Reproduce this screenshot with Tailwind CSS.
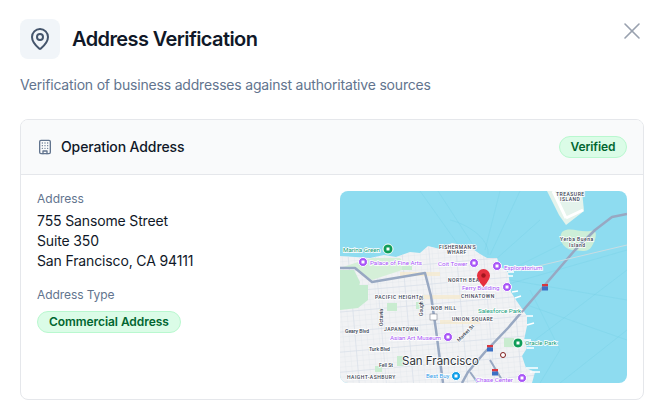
<!doctype html>
<html>
<head>
<meta charset="utf-8">
<script src="https://cdn.jsdelivr.net/npm/@tailwindcss/browser@4"></script>
</head>
<body class="bg-white font-['Inter',sans-serif]">
<div class="w-[664px] h-[412px] overflow-hidden px-5 pt-[19px]">
  <div class="flex items-start justify-between">
    <div class="flex items-center gap-3">
      <div class="w-10 h-10 rounded-lg bg-slate-100 flex items-center justify-center">
        <svg class="w-6 h-6 text-slate-600" viewBox="0 0 24 24" fill="none" stroke="currentColor" stroke-width="2" stroke-linecap="round" stroke-linejoin="round"><path d="M20 10c0 4.993-5.539 10.193-7.399 11.799a1 1 0 0 1-1.202 0C9.539 20.193 4 14.993 4 10a8 8 0 0 1 16 0"/><circle cx="12" cy="10" r="3"/></svg>
      </div>
      <h1 class="text-xl leading-7 font-semibold text-gray-900 tracking-[-0.6px]">Address Verification</h1>
    </div>
    <svg class="w-7 h-7 mt-[-2px] mr-[-2px] text-gray-400" viewBox="0 0 24 24" fill="none" stroke="currentColor" stroke-width="1.4" stroke-linecap="round" stroke-linejoin="round"><path d="M18 6 6 18"/><path d="m6 6 12 12"/></svg>
  </div>
  <p class="mt-4 text-sm leading-5 text-slate-500 tracking-[-0.19px]">Verification of business addresses against authoritative sources</p>
  <div class="mt-6 w-[624px] h-[281px] rounded-lg border border-gray-200 overflow-hidden">
    <div class="h-[55px] px-4 bg-gray-50 border-b border-gray-200 flex items-center justify-between">
      <div class="flex items-center gap-2">
        <svg class="w-4 h-4 text-slate-500" viewBox="0 0 24 24" fill="none" stroke="currentColor" stroke-width="2" stroke-linecap="round" stroke-linejoin="round"><rect x="4" y="2" width="16" height="20" rx="2"/><path d="M9 22v-4h6v4"/><path d="M8 6h.01M12 6h.01M16 6h.01M8 10h.01M12 10h.01M16 10h.01M8 14h.01M12 14h.01M16 14h.01"/></svg>
        <span class="text-sm leading-5 font-medium text-gray-900 tracking-[-0.12px]">Operation Address</span>
      </div>
      <span class="h-[22px] w-[68px] justify-center rounded-full border border-green-200 bg-green-100 text-green-800 text-xs font-semibold tracking-[-0.1px] flex items-center">Verified</span>
    </div>
    <div class="grid grid-cols-2 gap-4 p-4">
      <div>
        <div class="text-xs leading-4 text-slate-500">Address</div>
        <div class="mt-1 text-sm leading-5 text-gray-900 tracking-[-0.14px]">755 Sansome Street<br>Suite 350<br>San Francisco, CA 94111</div>
        <div class="mt-4 text-xs leading-4 text-slate-500 tracking-[-0.08px]">Address Type</div>
        <span class="mt-2 inline-flex items-center h-[22px] px-[11px] rounded-full border border-green-200 bg-green-100 text-green-800 text-xs font-semibold tracking-[-0.06px]">Commercial Address</span>
      </div>
      <div class="h-[192px] rounded-lg overflow-hidden">
        <svg class="block w-[287px] h-[192px]" viewBox="340 191 287 192" font-family="Roboto, sans-serif">
          <defs>
            <pattern id="grid" x="0" y="0" width="6" height="5" patternUnits="userSpaceOnUse" patternTransform="rotate(-5)">
              <path d="M0 0H6M0 0V5" stroke="#e0e4eb" stroke-width="0.7" fill="none"/>
            </pattern>
            <pattern id="grid2" x="0" y="0" width="27" height="20" patternUnits="userSpaceOnUse" patternTransform="rotate(-5)">
              <path d="M0 0H27M0 0V20" stroke="#d3dce8" stroke-width="1" fill="none"/>
            </pattern>
            <clipPath id="land"><path d="M340 256L370 258L384 255L396 257L410 252L420 253L428 246L440 249L452 243L470 247L480 254L487 258L497 258L500 266L508 272L511 292L516 300L527 316L527 326L524 340L527 348L522 356L526 368L535 372L532 383L340 383Z"/></clipPath>
          </defs>
          <rect x="340" y="191" width="287" height="192" fill="#8edcf0"/>
          <g stroke="#6fcde2" stroke-width="0.5" fill="none" opacity=".55">
            <path d="M420 191L462 250M438 191L475 248M485 250L500 191M490 255L520 191M495 260L540 220M500 275L570 240M505 285L627 250M527 305L627 340M535 340L627 270M530 290L560 350L540 383M510 280L627 300M450 220C470 225 490 240 488 255M560 383L627 330"/>
          </g>
          <path d="M547 191H582L584 211L566 225L559 215Z" fill="#e4f3ec"/>
          <path d="M553 191L566 218M566 218L583 210" stroke="#fff" stroke-width="3" fill="none"/>
          <path d="M562 232C570 226 580 233 590 231C598 228 597 238 592 246C588 254 578 250 572 250C562 248 558 238 562 232Z" fill="#cdeed8"/>
          <path d="M340 256L370 258L384 255L396 257L410 252L420 253L428 246L440 249L452 243L470 247L480 254L487 258L497 258L500 266L508 272L511 292L516 300L527 316L527 326L524 340L527 348L522 356L526 368L535 372L532 383L340 383Z" fill="#f1f2f4"/>
          <g stroke="#fff" stroke-width="1.5" fill="none">
            <path d="M508 272H514M508 276H513M512 292L518 291M515 298L521 296M526 316L533 316M527 325L534 323M524 340H531M527 348H534M526 368H538M530 372H540"/>
          </g>
          <rect x="340" y="191" width="287" height="192" fill="url(#grid)" clip-path="url(#land)"/>
          <rect x="340" y="191" width="287" height="192" fill="url(#grid2)" clip-path="url(#land)"/>
          <g clip-path="url(#land)">
            <path d="M340 268L358 262L372 258L400 258L408 268L372 280L355 268Z" fill="#d5efd8"/>
            <path d="M340 270H354L360 282L358 292L340 290Z" fill="#c5ebcf"/>
            <path d="M340 285H368V300L358 308L340 310Z" fill="#c5ebcf"/>
            <path d="M387 303H397V311H387ZM416 302H424V309H416ZM397 356H404V366H397ZM375 366H382V372H375ZM402 262H412V270H402ZM504 338H514V347H504Z" fill="#c9ecd0"/>
            <path d="M400 272H440V276H400ZM420 295H470V299H420ZM440 320H480V324H440Z" fill="#f6eacb" opacity=".7"/>
          </g>
          <g stroke="#98a8c2" stroke-width="2.5" fill="none" stroke-linejoin="round">
            <path d="M340 268L355 268L372 282L425 273L431 296L436 330L443 383"/>
            <path d="M627 214L612 217L595 230L575 250L538 293L508 328L485 352L468 372L462 383"/>
            <path d="M478 383L470 372M490 360L502 380" stroke-width="2"/>
          </g>
          <path d="M627 245L530 268" stroke="#c8dce2" stroke-width="1" fill="none"/>
          <g font-size="6.2" stroke="#fff" stroke-width="1.6" paint-order="stroke">
            <text x="370" y="265" fill="#a855f7">Palace of Fine Arts</text>
            <text x="438" y="266" fill="#a855f7">Coit Tower</text>
            <text x="462" y="290" fill="#a855f7">Ferry Building</text>
            <text x="504" y="270" fill="#a855f7">Exploratorium</text>
            <text x="390" y="340" fill="#a855f7">Asian Art Museum</text>
            <text x="476" y="382" fill="#a855f7">Chase Center</text>
          </g>
          <g font-size="6.2" fill="#0f9d7a" stroke="#fff" stroke-width="1.6" paint-order="stroke">
            <text x="343" y="252">Marina Green</text>
            <text x="478" y="313">Salesforce Park</text>
            <text x="525" y="345">Oracle Park</text>
          </g>
          <g font-size="5" font-weight="500" fill="#374151" stroke="#fff" stroke-width="1.4" paint-order="stroke" letter-spacing=".5">
            <text x="439" y="249">FISHERMAN'S</text>
            <text x="447" y="254">WHARF</text>
            <text x="448" y="282">NORTH BEACH</text>
            <text x="461" y="298">CHINATOWN</text>
            <text x="375" y="299">PACIFIC HEIGHTS</text>
            <text x="431" y="310">NOB HILL</text>
            <text x="452" y="321">UNION SQUARE</text>
            <text x="384" y="331">JAPANTOWN</text>
            <text x="347" y="379">HAIGHT-ASHBURY</text>
            <text x="556" y="196">TREASURE</text>
            <text x="560" y="201">ISLAND</text>
            <text x="560" y="241">Yerba Buena</text>
            <text x="569" y="247">Island</text>
            <text x="345" y="333" letter-spacing="0">Geary Blvd</text>
            <text x="369" y="351" letter-spacing="0">Turk Blvd</text>
            <text x="379" y="367" letter-spacing="0">Fell St</text>
            <text transform="translate(383 326) rotate(-90)" letter-spacing="0">Octavia</text>
            <text transform="translate(423 316) rotate(-90)" letter-spacing="0">Gough St</text>
            <text transform="translate(459 342) rotate(-45)" letter-spacing="0">Market St</text>
          </g>
          <text x="402" y="365" font-size="11.5" font-family="Inter, sans-serif" fill="#30343a" stroke="#fff" stroke-width="1.5" paint-order="stroke">San Francisco</text>
          <text x="426" y="378" font-size="6" fill="#2f9be8" stroke="#fff" stroke-width="1.5" paint-order="stroke">Best Buy</text>
          <g stroke="#fff" stroke-width="1">
            <circle cx="363" cy="262" r="4.5" fill="#a855f7"/><circle cx="474" cy="263" r="4.5" fill="#a855f7"/><circle cx="497" cy="266" r="4.5" fill="#a855f7"/><circle cx="507" cy="287" r="4.5" fill="#a855f7"/><circle cx="448" cy="337" r="4.5" fill="#a855f7"/><circle cx="522" cy="378" r="4.5" fill="#a855f7"/>
            <circle cx="388" cy="249" r="5" fill="#0f9d58"/><circle cx="518" cy="343" r="5" fill="#0f9d58"/>
            <circle cx="456" cy="376" r="4.5" fill="#109ee8"/>
          </g>
          <g fill="#fff">
            <rect x="361.5" y="260.5" width="3" height="3"/><rect x="472.5" y="261.5" width="3" height="3"/><rect x="495.5" y="264.5" width="3" height="3"/><rect x="505.5" y="285.5" width="3" height="3"/><rect x="446.5" y="335.5" width="3" height="3"/><rect x="520.5" y="376.5" width="3" height="3"/>
            <rect x="386.5" y="247.5" width="3" height="3"/><rect x="516.5" y="341.5" width="3" height="3"/><rect x="454.5" y="374.5" width="3" height="3"/>
          </g>
          <g>
            <rect x="542" y="284" width="6" height="2.5" fill="#d9363e"/><rect x="542" y="286.5" width="6" height="4" fill="#3b6fc4"/>
            <rect x="487" y="345" width="6" height="2.5" fill="#d9363e"/><rect x="487" y="347.5" width="6" height="4" fill="#3b6fc4"/>
            <rect x="492" y="369" width="6" height="2.5" fill="#d9363e"/><rect x="492" y="371.5" width="6" height="4" fill="#3b6fc4"/>
          </g>
          <rect x="430" y="314" width="7" height="6" fill="#fff" stroke="#6b7280" stroke-width=".5"/>
          <circle cx="503" cy="355" r="2.5" fill="#fff" stroke="#7f1d1d" stroke-width="1"/>
          <path d="M483.5 287C483.5 287 477 280 477 275.5A6.5 6.5 0 0 1 490 275.5C490 280 483.5 287 483.5 287Z" fill="#e5303e"/>
          <circle cx="483.5" cy="275.5" r="2.2" fill="#a3161f"/>
        </svg>
      </div>
    </div>
  </div>
</div>
</body>
</html>
